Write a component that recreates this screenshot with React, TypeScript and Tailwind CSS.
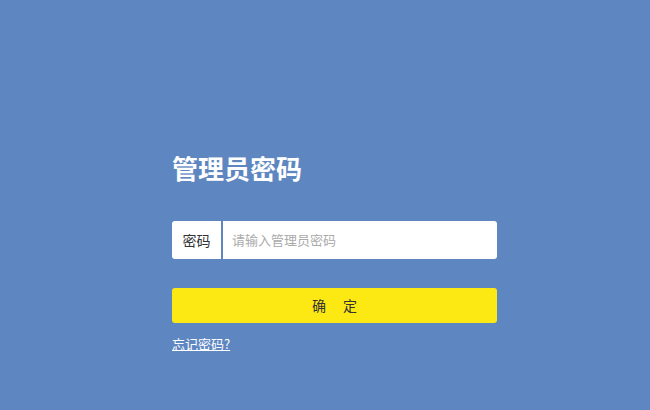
export default function App() {
  return (
    <div
      className="flex h-[410px] w-[650px] flex-col bg-[#5e86c1] pl-[172px] pt-[150px]"
      style={{ fontFamily: '"Noto Sans CJK SC", "Noto Sans", sans-serif' }}
    >
      <h1 className="text-[26px] font-bold leading-[36px] text-white">管理员密码</h1>

      <div className="mt-[35px] flex h-[38px] w-[325px] overflow-hidden rounded-[3px] bg-white">
        <span className="flex w-[49px] items-center justify-center text-[14px] text-[#333]">密码</span>
        <span className="w-[2px] bg-[#5e86c1]" />
        <input
          placeholder="请输入管理员密码"
          className="flex-1 px-[9px] text-[13px] text-[#333] outline-none placeholder:text-[#aaa]"
        />
      </div>

      <button className="mt-[29px] flex h-[35px] w-[325px] items-center justify-center gap-[17px] rounded-[3px] bg-[#fce914] text-[14px] text-[#333]">
        <span>确</span>
        <span>定</span>
      </button>

      <a href="#" className="mt-[11px] w-fit text-[13px] leading-[20px] text-white underline">
        忘记密码?
      </a>
    </div>
  )
}
